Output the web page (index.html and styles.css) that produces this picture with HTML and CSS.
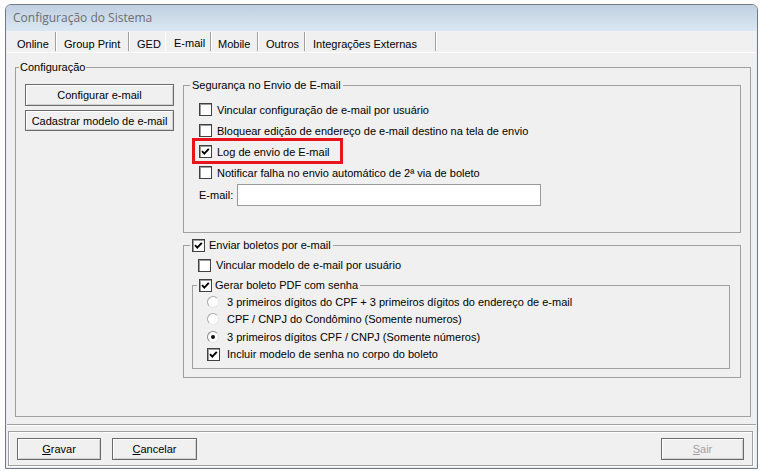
FILE: index.html
```html
<!DOCTYPE html>
<html lang="pt-BR">
<head>
<meta charset="utf-8">
<title>Configuração do Sistema</title>
<link rel="stylesheet" href="styles.css">
</head>
<body>
<div class="window">
  <div class="titlebar">Configuração do Sistema</div>
  <div class="client">
    <div class="tabs">
      <div class="tab t-online">Online</div>
      <div class="tab t-group">Group Print</div>
      <div class="tab t-ged">GED</div>
      <div class="tab t-email active">E-mail</div>
      <div class="tab t-mobile">Mobile</div>
      <div class="tab t-outros">Outros</div>
      <div class="tab t-integ">Integrações Externas</div>
    </div>
    <div class="page">
      <fieldset class="group g-main">
        <legend class="lg lg-main">Configuração</legend>
        <div class="main-body">
          <div class="left-col">
            <div class="btn btn-side">Configurar e-mail</div>
            <div class="btn btn-side">Cadastrar modelo de e-mail</div>
          </div>
          <div class="right-col">
            <fieldset class="group g-seg">
              <legend class="lg lg-seg">Segurança no Envio de E-mail</legend>
              <div class="seg-body">
                <div class="row"><span class="cb"></span><span class="lbl">Vincular configuração de e-mail por usuário</span></div>
                <div class="row"><span class="cb"></span><span class="lbl">Bloquear edição de endereço de e-mail destino na tela de envio</span></div>
                <div class="row row-mark"><span class="cb on"><svg viewBox="0 0 11 11" width="11" height="11"><polyline points="2,5.2 4.3,7.6 8.8,2.8" fill="none" stroke="#000" stroke-width="1.9"/></svg></span><span class="lbl">Log de envio de E-mail</span><span class="highlight"></span></div>
                <div class="row"><span class="cb"></span><span class="lbl">Notificar falha no envio automático de 2ª via de boleto</span></div>
                <div class="email-row"><span class="email-lbl">E-mail:</span><span class="textbox"></span></div>
              </div>
            </fieldset>
            <fieldset class="group g-env">
              <legend class="lg lg-env"><span class="cb on"><svg viewBox="0 0 11 11" width="11" height="11"><polyline points="2,5.2 4.3,7.6 8.8,2.8" fill="none" stroke="#000" stroke-width="1.9"/></svg></span><span class="lbl">Enviar boletos por e-mail</span></legend>
              <div class="env-body">
                <div class="row row-env"><span class="cb"></span><span class="lbl">Vincular modelo de e-mail por usuário</span></div>
                <fieldset class="group g-pdf">
                  <legend class="lg lg-pdf"><span class="cb on"><svg viewBox="0 0 11 11" width="11" height="11"><polyline points="2,5.2 4.3,7.6 8.8,2.8" fill="none" stroke="#000" stroke-width="1.9"/></svg></span><span class="lbl">Gerar boleto PDF com senha</span></legend>
                  <div class="pdf-body">
                    <div class="row row-pdf"><span class="rd"></span><span class="lbl">3 primeiros dígitos do CPF + 3 primeiros dígitos do endereço de e-mail</span></div>
                    <div class="row row-pdf"><span class="rd"></span><span class="lbl">CPF / CNPJ do Condômino (Somente numeros)</span></div>
                    <div class="row row-pdf"><span class="rd on"></span><span class="lbl">3 primeiros dígitos CPF / CNPJ (Somente números)</span></div>
                    <div class="row row-pdf"><span class="cb on"><svg viewBox="0 0 11 11" width="11" height="11"><polyline points="2,5.2 4.3,7.6 8.8,2.8" fill="none" stroke="#000" stroke-width="1.9"/></svg></span><span class="lbl">Incluir modelo de senha no corpo do boleto</span></div>
                  </div>
                </fieldset>
              </div>
            </fieldset>
          </div>
        </div>
      </fieldset>
    </div>
    <div class="separator"></div>
    <div class="bottom-panel">
      <div class="btn btn-act"><span><u>G</u>ravar</span></div>
      <div class="btn btn-act btn-cancel"><span><u>C</u>ancelar</span></div>
      <div class="btn btn-act btn-exit disabled"><span><u>S</u>air</span></div>
    </div>
  </div>
</div>
</body>
</html>
```

FILE: styles.css
```css
* { box-sizing: border-box; }
html, body { margin: 0; padding: 0; background: #ffffff; }
body {
  font-family: "Liberation Sans", Arial, sans-serif;
  font-size: 11px;
  color: #000;
}

.window {
  margin: 4px 0 0 5px;
  width: 753px;
  height: 465px;
  border: 1px solid #727a83;
  border-radius: 6px 6px 0 0;
  background: #e6ecf2;
  display: flex;
  flex-direction: column;
  overflow: hidden;
}

.titlebar {
  flex: none;
  height: 26px;
  padding-left: 7px;
  line-height: 26px;
  background: linear-gradient(#c0d0e1, #dbe7f3);
  font-family: "Open Sans", "Noto Sans", sans-serif;
  font-size: 12px;
  color: #6d6d6d;
}

.client {
  flex: 1;
  margin: 0 1px 1px 1px;
  background: #f0f0f0;
  display: flex;
  flex-direction: column;
}

/* tabs */
.tabs {
  flex: none;
  height: 22px;
  border-bottom: 1px solid #ffffff;
  display: flex;
  align-items: flex-start;
}
.tab {
  height: 19px;
  margin-top: 1px;
  padding-top: 4px;
  line-height: 16px;
  white-space: nowrap;
  border-right: 1px solid #a0a0a0;
  box-shadow: 1px 0 0 #ffffff;
}
.t-online { width: 49px; padding-left: 10px; }
.t-group { width: 72px; padding-left: 7px; margin-left: 1px; }
.t-ged { width: 35px; padding-left: 7px; margin-left: 1px; border-right: none; box-shadow: none; }
.t-email { width: 46px; padding-left: 8px; border-left: 1px solid #ffffff; border-right: 1px solid #a0a0a0; }
.tab.active { padding-top: 3px; }
.t-mobile { width: 46px; padding-left: 6px; margin-left: 1px; }
.t-outros { width: 46px; padding-left: 7px; margin-left: 1px; }
.t-integ { width: 130px; padding-left: 7px; margin-left: 1px; }

/* page */
.page {
  flex: none;
  padding: 8px 5px 0 8px;
}

.group {
  margin: 0;
  padding: 0;
  min-width: 0;
  border: 1px solid #a0a0a0;
}
.lg {
  padding: 0 2px;
  line-height: 13px;
  height: 13px;
  white-space: nowrap;
  display: flex;
  align-items: center;
}
.g-main { height: 356px; }
.lg-main { margin-left: 3px; padding: 0 1px; }

.main-body {
  display: flex;
  gap: 9px;
  padding: 5px 9px 0 9px;
}
.left-col {
  width: 149px;
  flex: none;
  padding-top: 5px;
  display: flex;
  flex-direction: column;
  gap: 4px;
}
.btn {
  height: 22px;
  border: 1px solid #6a6a6a;
  background: #f0f0f0;
  box-shadow: inset 1px 1px 0 #ffffff, inset -1px -1px 0 #d0d0d0;
  display: flex;
  align-items: center;
  justify-content: center;
  white-space: nowrap;
}
.btn-side { width: 149px; }
.left-col .btn-side:last-child { height: 21px; }

.right-col {
  width: 558px;
  flex: none;
}

.g-seg { height: 154px; }
.lg-seg { margin-left: 6px; }
.seg-body { padding: 7px 0 0 15px; }

.row {
  height: 21px;
  display: flex;
  align-items: center;
  white-space: nowrap;
}
.row-mark { position: relative; }
.highlight {
  position: absolute;
  left: -7px;
  top: -3px;
  width: 151px;
  height: 26px;
  border: 3px solid #e8141c;
}

.cb {
  width: 13px;
  height: 13px;
  flex: none;
  border: 1px solid #404040;
  background: #ffffff;
  box-shadow: inset 1px 1px 0 #9c9c9c;
  display: flex;
  align-items: center;
  justify-content: center;
}
.cb svg { display: block; }
.row .cb { margin-right: 5px; }

.email-row {
  margin-top: 1px;
  height: 22px;
  display: flex;
  align-items: center;
}
.email-lbl { width: 38px; flex: none; }
.textbox {
  width: 304px;
  height: 22px;
  border: 1px solid #9a9a9a;
  background: #ffffff;
}

.g-env { margin-top: 6px; height: 139px; }
.lg-env { margin-left: 6px; }
.lg-env .cb { margin-right: 4px; }
.env-body { padding: 3px 10px 0 8px; }
.row-env { height: 20px; padding-left: 6px; }
.row-env .cb { margin-right: 5px; }

.g-pdf { margin-top: 4px; height: 90px; }
.lg-pdf { margin-left: 4px; }
.lg-pdf .cb { margin-right: 3px; }
.pdf-body { padding: 1px 0 0 14px; }
.row-pdf { height: 17.5px; }
.row-pdf .cb { margin-right: 7px; }

.rd {
  width: 12px;
  height: 12px;
  flex: none;
  margin-right: 8px;
  border-radius: 50%;
  border: 1px solid;
  border-color: #a9a9a9 #e6e6e6 #e6e6e6 #a9a9a9;
  background: #ffffff;
  display: flex;
  align-items: center;
  justify-content: center;
}
.rd.on { border-color: #8a8a8a #e0e0e0 #e0e0e0 #8a8a8a; }
.rd.on::after {
  content: "";
  width: 4px;
  height: 4px;
  border-radius: 50%;
  background: #111;
}

/* bottom */
.separator {
  flex: none;
  margin-top: 7px;
  height: 2px;
  border-top: 1px solid #a0a0a0;
  border-bottom: 1px solid #ffffff;
}
.bottom-panel {
  flex: none;
  margin: 5px 3px 0 1px;
  height: 35px;
  border: 1px solid #a0a0a0;
  box-shadow: inset 1px 1px 0 #ffffff, 1px 1px 0 #ffffff;
  padding: 6px 8px 0 8px;
  display: flex;
  align-items: flex-start;
}
.btn-act { width: 84px; }
.btn-cancel { margin-left: 11px; width: 85px; }
.btn-exit { margin-left: auto; width: 83px; }
.disabled { color: #a0a0a0; }
```
